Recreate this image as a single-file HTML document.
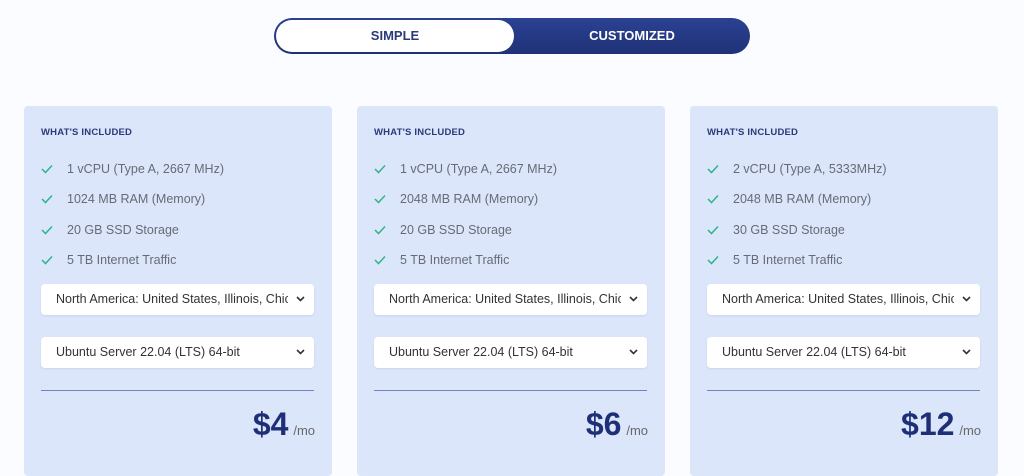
<!DOCTYPE html>
<html><head><meta charset="utf-8"><style>
*{margin:0;padding:0;box-sizing:border-box}
body{width:1024px;height:463px;overflow:hidden;background:#fbfcff;font-family:"Liberation Sans",sans-serif;position:relative}
.tog{position:absolute;left:274px;top:18px;width:476px;height:36px;border-radius:18px;background:linear-gradient(#2b4192,#1f3278);}
.tog .w{position:absolute;left:2px;top:2px;width:238px;height:32px;border-radius:16px;background:#fff;color:#2b3a7a;font-weight:bold;font-size:13px;text-align:center;line-height:32px}
.tog .c{position:absolute;left:240px;top:0;width:236px;height:36px;color:#fff;font-weight:bold;font-size:13px;text-align:center;line-height:36px}
.card{position:absolute;top:106px;width:308px;height:370px;background:#dce6fb;border-radius:4px}
.h{position:absolute;left:17px;top:21px;font-size:9.5px;font-weight:bold;color:#2b3a78;letter-spacing:.2px}
.it{position:absolute;left:17px;font-size:12.5px;color:#666b75}
.it svg{position:absolute;left:0;top:2px}
.it span{position:absolute;left:26px;white-space:nowrap}
.sel{position:absolute;left:17px;width:273px;height:31px;background:#fff;border-radius:4px;box-shadow:0 1px 2px rgba(0,0,0,.08);font-size:12.5px;color:#333;line-height:31px;padding-left:15px;white-space:nowrap;overflow:hidden}
.sel i{position:absolute;right:0;top:0;width:26px;height:31px;background:#fff}
.sel i svg{position:absolute;left:8px;top:12px}
.ln{position:absolute;left:17px;top:284px;width:273px;height:1px;background:#7083c2}
.pr{position:absolute;right:17px;top:300px;color:#1e2f78;font-weight:bold;font-size:32px;white-space:nowrap}
.pr small{font-size:13px;font-weight:normal;color:#666;margin-left:-4px}
</style></head><body>
<div class="tog"><div class="w">SIMPLE</div><div class="c">CUSTOMIZED</div></div>

<div class="card" style="left:24px">
<div class="h">WHAT'S INCLUDED</div>
<div class="it" style="top:56px"><svg width="12" height="10"><path d="M1 5l3.5 3.5L11 1.5" stroke="#2bb58a" stroke-width="1.5" fill="none"/></svg><span>1 vCPU (Type A, 2667 MHz)</span></div>
<div class="it" style="top:86px"><svg width="12" height="10"><path d="M1 5l3.5 3.5L11 1.5" stroke="#2bb58a" stroke-width="1.5" fill="none"/></svg><span>1024 MB RAM (Memory)</span></div>
<div class="it" style="top:117px"><svg width="12" height="10"><path d="M1 5l3.5 3.5L11 1.5" stroke="#2bb58a" stroke-width="1.5" fill="none"/></svg><span>20 GB SSD Storage</span></div>
<div class="it" style="top:147px"><svg width="12" height="10"><path d="M1 5l3.5 3.5L11 1.5" stroke="#2bb58a" stroke-width="1.5" fill="none"/></svg><span>5 TB Internet Traffic</span></div>
<div class="sel" style="top:178px">North America: United States, Illinois, Chicago<i><svg width="9" height="6"><path d="M1 1l3.5 3.5L8 1" stroke="#333" stroke-width="1.6" fill="none"/></svg></i></div>
<div class="sel" style="top:231px">Ubuntu Server 22.04 (LTS) 64-bit<i><svg width="9" height="6"><path d="M1 1l3.5 3.5L8 1" stroke="#333" stroke-width="1.6" fill="none"/></svg></i></div>
<div class="ln"></div>
<div class="pr">$4 <small>/mo</small></div>
</div>

<div class="card" style="left:357px">
<div class="h">WHAT'S INCLUDED</div>
<div class="it" style="top:56px"><svg width="12" height="10"><path d="M1 5l3.5 3.5L11 1.5" stroke="#2bb58a" stroke-width="1.5" fill="none"/></svg><span>1 vCPU (Type A, 2667 MHz)</span></div>
<div class="it" style="top:86px"><svg width="12" height="10"><path d="M1 5l3.5 3.5L11 1.5" stroke="#2bb58a" stroke-width="1.5" fill="none"/></svg><span>2048 MB RAM (Memory)</span></div>
<div class="it" style="top:117px"><svg width="12" height="10"><path d="M1 5l3.5 3.5L11 1.5" stroke="#2bb58a" stroke-width="1.5" fill="none"/></svg><span>20 GB SSD Storage</span></div>
<div class="it" style="top:147px"><svg width="12" height="10"><path d="M1 5l3.5 3.5L11 1.5" stroke="#2bb58a" stroke-width="1.5" fill="none"/></svg><span>5 TB Internet Traffic</span></div>
<div class="sel" style="top:178px">North America: United States, Illinois, Chicago<i><svg width="9" height="6"><path d="M1 1l3.5 3.5L8 1" stroke="#333" stroke-width="1.6" fill="none"/></svg></i></div>
<div class="sel" style="top:231px">Ubuntu Server 22.04 (LTS) 64-bit<i><svg width="9" height="6"><path d="M1 1l3.5 3.5L8 1" stroke="#333" stroke-width="1.6" fill="none"/></svg></i></div>
<div class="ln"></div>
<div class="pr">$6 <small>/mo</small></div>
</div>

<div class="card" style="left:690px">
<div class="h">WHAT'S INCLUDED</div>
<div class="it" style="top:56px"><svg width="12" height="10"><path d="M1 5l3.5 3.5L11 1.5" stroke="#2bb58a" stroke-width="1.5" fill="none"/></svg><span>2 vCPU (Type A, 5333MHz)</span></div>
<div class="it" style="top:86px"><svg width="12" height="10"><path d="M1 5l3.5 3.5L11 1.5" stroke="#2bb58a" stroke-width="1.5" fill="none"/></svg><span>2048 MB RAM (Memory)</span></div>
<div class="it" style="top:117px"><svg width="12" height="10"><path d="M1 5l3.5 3.5L11 1.5" stroke="#2bb58a" stroke-width="1.5" fill="none"/></svg><span>30 GB SSD Storage</span></div>
<div class="it" style="top:147px"><svg width="12" height="10"><path d="M1 5l3.5 3.5L11 1.5" stroke="#2bb58a" stroke-width="1.5" fill="none"/></svg><span>5 TB Internet Traffic</span></div>
<div class="sel" style="top:178px">North America: United States, Illinois, Chicago<i><svg width="9" height="6"><path d="M1 1l3.5 3.5L8 1" stroke="#333" stroke-width="1.6" fill="none"/></svg></i></div>
<div class="sel" style="top:231px">Ubuntu Server 22.04 (LTS) 64-bit<i><svg width="9" height="6"><path d="M1 1l3.5 3.5L8 1" stroke="#333" stroke-width="1.6" fill="none"/></svg></i></div>
<div class="ln"></div>
<div class="pr">$12 <small>/mo</small></div>
</div>
</body></html>
